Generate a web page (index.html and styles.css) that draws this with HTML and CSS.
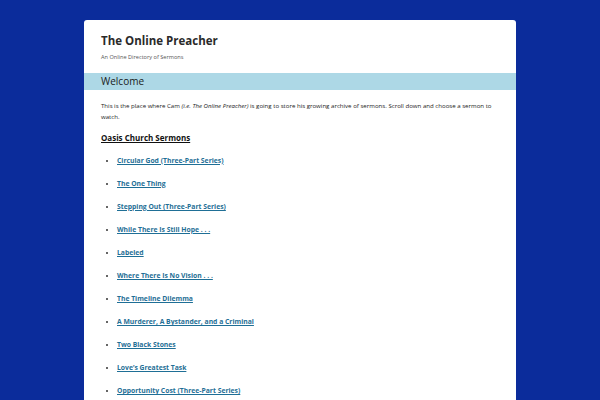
FILE: index.html
```html
<!DOCTYPE html>
<html>
<head>
<meta charset="utf-8">
<link rel="stylesheet" href="styles.css">
</head>
<body>
<div class="page">
  <header class="site-header">
    <h1 class="site-title">The Online Preacher</h1>
    <p class="site-desc">An Online Directory of Sermons</p>
  </header>
  <div class="welcome">Welcome</div>
  <div class="content">
    <p class="intro">This is the place where Cam <em>(i.e. The Online Preacher)</em> is going to store his growing archive of sermons. Scroll down and choose a sermon to watch.</p>
    <h2 class="section">Oasis Church Sermons</h2>
    <ul class="sermons">
      <li><a href="#">Circular God (Three-Part Series)</a></li>
      <li><a href="#">The One Thing</a></li>
      <li><a href="#">Stepping Out (Three-Part Series)</a></li>
      <li><a href="#">While There Is Still Hope . . .</a></li>
      <li><a href="#">Labeled</a></li>
      <li><a href="#">Where There Is No Vision . . .</a></li>
      <li><a href="#">The Timeline Dilemma</a></li>
      <li><a href="#">A Murderer, A Bystander, and a Criminal</a></li>
      <li><a href="#">Two Black Stones</a></li>
      <li><a href="#">Love’s Greatest Task</a></li>
      <li><a href="#">Opportunity Cost (Three-Part Series)</a></li>
      <li><a href="#">The Gift of Grace</a></li>
    </ul>
  </div>
</div>
</body>
</html>
```

FILE: styles.css
```css
html, body {
  margin: 0;
  padding: 0;
  height: 400px;
  overflow: hidden;
}
body {
  background: #0b2c9b;
  font-family: "Open Sans", "DejaVu Sans", sans-serif;
  color: #444;
}
.page {
  width: 432px;
  margin: 20px auto 0;
  background: #fff;
  border-radius: 3px 3px 0 0;
  min-height: 400px;
}
.site-header {
  padding: 11px 17px 11px;
}
.site-title {
  margin: 0;
  font-size: 11.5px;
  line-height: 20px;
  font-weight: 700;
  color: #2a2a2a;
}
.site-desc {
  margin: 1px 0 0;
  font-size: 5.6px;
  line-height: 10px;
  color: #555;
}
.welcome {
  background: #add8e6;
  height: 17px;
  line-height: 17px;
  padding-left: 17px;
  font-size: 10px;
  color: #1a1a1a;
}
.content {
  padding: 0 17px;
}
.intro {
  margin: 9.5px 0 0;
  font-size: 6.1px;
  line-height: 11px;
  color: #222;
}
.section {
  margin: 10.5px 0 0;
  font-size: 8px;
  line-height: 12px;
  font-weight: 700;
  color: #111;
  text-decoration: underline;
}
.sermons {
  margin: 10.5px 0 0;
  padding-left: 16px;
  font-size: 6.8px;
  line-height: 11px;
  font-weight: 700;
}
.sermons li {
  margin-bottom: 12.1px;
}
.sermons li::marker {
  color: #333;
}
.sermons a {
  color: #1f6f96;
  text-decoration: underline;
}
```
